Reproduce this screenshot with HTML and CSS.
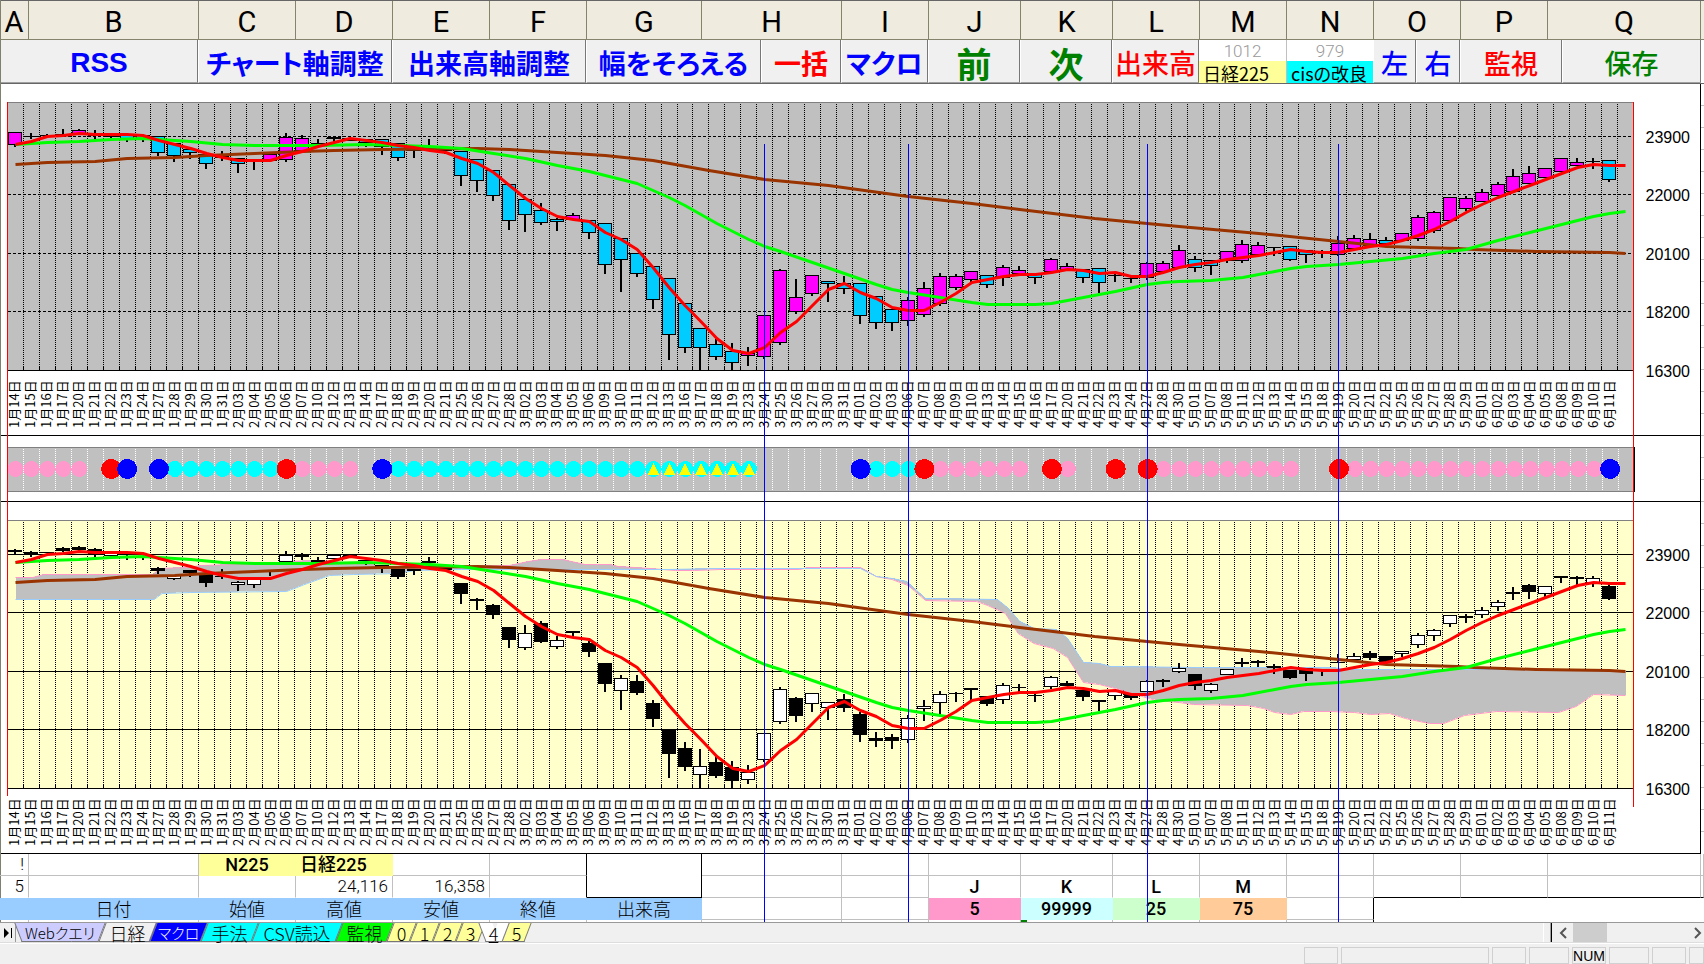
FILE: index.html
```html
<!DOCTYPE html>
<html lang="ja">
<head>
<meta charset="utf-8">
<title>日経225 チャート</title>
<link rel="stylesheet" href="styles.css">
</head>
<body>
<main class="sheet">
  <div class="columns">
    <span>A</span><span>B</span><span>C</span><span>D</span><span>E</span><span>F</span><span>G</span><span>H</span><span>I</span><span>J</span><span>K</span><span>L</span><span>M</span><span>N</span><span>O</span><span>P</span><span>Q</span><span></span>
  </div>
  <div class="macros">
    <button class="macro blue bold latin">RSS</button>
    <button class="macro blue bold">チャート軸調整</button>
    <button class="macro blue bold">出来高軸調整</button>
    <button class="macro blue bold">幅をそろえる</button>
    <button class="macro red bold">一括</button>
    <button class="macro blue bold">マクロ</button>
    <button class="macro green bold large">前</button>
    <button class="macro green bold large">次</button>
    <button class="macro red">出来高</button>
    <div class="info"><span class="info-num">1012</span><span class="info-name yellow">日経225</span></div>
    <div class="info"><span class="info-num">979</span><span class="info-name aqua">cisの改良</span></div>
    <button class="macro blue">左</button>
    <button class="macro blue">右</button>
    <button class="macro red">監視</button>
    <button class="macro green">保存</button>
    <div class="macro-end"></div>
  </div>
  <div class="body">
    <svg class="charts" id="charts" viewBox="0 84 1704 770" role="img" aria-label="日経225 日足チャート"></svg>
    <table class="cells">
      <colgroup>
        <col class="wa"><col class="wb"><col class="wc"><col class="wc"><col class="wc"><col class="wc"><col class="wg"><col class="wh"><col class="wi"><col class="wj"><col class="wj"><col class="wi"><col class="wi"><col class="wi"><col class="wi"><col class="wi"><col class="wq"><col class="wr">
      </colgroup>
      <tbody>
        <tr><td class="num">!</td><td></td><td class="yellow mid">N225</td><td class="yellow name">日経225</td><td></td><td class="to-box"></td><td class="box" rowspan="2"></td><td></td><td></td><td></td><td></td><td></td><td></td><td></td><td></td><td></td><td></td><td></td></tr>
        <tr><td class="num flat">5</td><td class="flat"></td><td class="flat"></td><td class="num flat">24,116</td><td class="num flat">16,358</td><td class="flat to-box"></td><td></td><td></td><td class="mid flat">J</td><td class="mid flat">K</td><td class="mid flat">L</td><td class="mid flat">M</td><td></td><td class="box-top"></td><td class="box-top"></td><td class="box-top"></td><td class="box-top"></td></tr>
        <tr class="heads"><td class="sky"></td><th class="sky">日付</th><th class="sky">始値</th><th class="sky">高値</th><th class="sky">安値</th><th class="sky">終値</th><th class="sky">出来高</th><td></td><td></td><td class="mid pink">5</td><td class="mid ice">99999</td><td class="mid mint">25</td><td class="mid peach">75</td><td class="box-left"></td><td class="open" colspan="4"></td></tr>
        <tr class="sliver"><td></td><td></td><td></td><td></td><td></td><td></td><td></td><td></td><td></td><td></td><td class="mark"></td><td></td><td></td><td class="box-left"></td><td class="open" colspan="4"></td></tr>
      </tbody>
    </table>
    <i class="event e1"></i><i class="event e2"></i><i class="event e3"></i><i class="event e4"></i>
  </div>
</main>
<nav class="tabbar">
  <button class="last" aria-label="最後のシート"><svg viewBox="0 0 10 10" width="10" height="10"><path d="M1 0v10l5-5zM8 0h1v10H8z"/></svg></button>
  <div class="tabs">
    <button class="tab wide small lilac first">Webクエリ</button>
    <button class="tab medium plain">日経</button>
    <button class="tab medium small navy">マクロ</button>
    <button class="tab medium aqua">手法</button>
    <button class="tab wide aqua">CSV読込</button>
    <button class="tab medium lime">監視</button>
    <button class="tab yellow">0</button>
    <button class="tab yellow">1</button>
    <button class="tab yellow">2</button>
    <button class="tab yellow">3</button>
    <button class="tab current first" aria-current="page">4</button>
    <button class="tab yellow">5</button>
  </div>
  <div class="scroll">
    <button aria-label="左へ"><svg viewBox="0 0 8 12" width="8" height="12"><path d="M7 1L2 6l5 5" fill="none" stroke="#555" stroke-width="2"/></svg></button>
    <div class="thumb"></div>
    <button class="to-right" aria-label="右へ"><svg viewBox="0 0 8 12" width="8" height="12"><path d="M1 1l5 5-5 5" fill="none" stroke="#555" stroke-width="2"/></svg></button>
  </div>
</nav>
<footer class="status">
  <span class="s34"></span><span class="s148"></span><span class="s34"></span><span class="s40"></span><span class="s34">NUM</span><span class="s40"></span><span class="s34"></span><span class="s15"></span>
</footer>
<script src="charts.js"></script>
</body>
</html>
```
FILE: styles.css
```css
* { box-sizing: border-box; }
body {
  margin: 0;
  background: #f0f0f0;
  color: #000;
  font-family: "Noto Sans CJK JP", "Liberation Sans", sans-serif;
  font-feature-settings: "palt";
  overflow-x: hidden;
}
button {
  margin: 0;
  padding: 0;
  border: 0;
  background: none;
  font: inherit;
  font-feature-settings: inherit;
  white-space: nowrap;
}

.yellow { background: #ffff99; --fill: #ffff99; }
.aqua { background: #00ffff; --fill: #00ffff; }
.blue { color: #0000ff; }
.red { color: #ff0000; }
.green { color: #008000; }

.sheet { position: relative; background: #fff; }
.sheet::before {
  content: "";
  position: absolute;
  left: 0;
  top: 0;
  bottom: 0;
  width: 1px;
  background: #808070;
}

.columns {
  display: grid;
  grid-template-columns: 29fr 170fr 97fr 97fr 97fr 97fr 115fr 140fr 87fr 92fr 92fr 87fr 87fr 87fr 87fr 87fr 153fr 3fr;
  grid-template-rows: 39px;
  height: 40px;
  border-top: 1px solid #666;
  background: #efebde;
  font: 29px/42px Roboto, "Liberation Sans", sans-serif;
  text-align: center;
}
.columns span {
  min-width: 0;
  border-right: 1px solid #84846c;
  border-bottom: 1px solid #84846c;
}
.columns span:last-child { border-right: 0; }

.macros {
  display: grid;
  grid-template-columns: 198fr 194fr 194fr 175fr 80fr 87fr 92fr 92fr 87fr 87fr 87fr 43fr 44fr 102fr 139fr 3fr;
  grid-template-rows: 43px;
  height: 44px;
  border-bottom: 1px solid #666;
}
.macro {
  min-width: 0;
  padding-top: 3px;
  background: #f0f0f0;
  border-left: 1px solid #fff;
  border-right: 1px solid #777;
  border-bottom: 1px solid #a0a0a0;
  font-size: 27px;
  font-weight: 500;
  line-height: 39px;
}
.bold { font-weight: 700; }
.large { font-size: 35px; }
.latin { font-family: "Liberation Sans", sans-serif; font-size: 28px; }
.info { display: flex; flex-direction: column; min-width: 0; text-align: center; }
.info + .info { border-left: 1px solid #c0c0c0; }
.info-num { flex: none; height: 21px; color: #999; font: 300 17px/22px Roboto, sans-serif; }
.info-name { flex: 1; min-height: 0; padding-left: 4px; font-size: 18px; line-height: 24px; text-align: left; white-space: nowrap; }
.macro-end { background: #fff; }

.body { position: relative; }
.charts { display: block; width: 100%; height: auto; shape-rendering: crispEdges; }
.charts polyline { shape-rendering: auto; }
.charts .date { font-size: 13px; font-feature-settings: "palt" 0; }
.charts .price { font: 16px "Liberation Sans", sans-serif; }

.cells { width: 100%; table-layout: fixed; border-collapse: separate; border-spacing: 0; font-size: 18px; line-height: 21px; }
.wa { width: 29px; }
.wb { width: 170px; }
.wc { width: 97px; }
.wg { width: 115px; }
.wh { width: 140px; }
.wi { width: 87px; }
.wj { width: 92px; }
.wq { width: 153px; }
.wr { width: 3px; }
.cells td, .cells th {
  height: 22px;
  padding: 0;
  border-right: 1px solid #c0c0c0;
  border-bottom: 1px solid #c0c0c0;
  font-weight: 300;
  white-space: nowrap;
}
.cells .sliver td { height: 2px; border-bottom: 0; }
.cells .num { padding-right: 4px; font: 300 17px/21px Roboto, sans-serif; text-align: right; }
.cells .mid, .cells .name { font-family: Roboto, "Noto Sans CJK JP", sans-serif; font-weight: 500; }
.cells .mid { text-align: center; }
.cells .name { padding-left: 4px; }
.cells .yellow { border-color: #ffff99; }
.cells .flat { border-bottom-color: transparent; }
.cells .sky { background: #99ccff; border-color: #99ccff; }
.cells .pink { background: #ff99cc; border-color: #ff99cc; }
.cells .ice { background: #ccffff; border-color: #ccffff; }
.cells .mint { background: #ccffcc; border-color: #ccffcc; }
.cells .peach { background: #ffcc99; border-color: #ffcc99; }
.cells .to-box, .cells .box-left { border-right-color: #000; }
.cells .box { border-color: #000; }
.cells .box-top { border-bottom-color: #000; }
.cells .open { border-color: transparent; }
.cells .mark { background: linear-gradient(90deg, #008000 6px, transparent 6px); }

.event { position: absolute; top: 60px; bottom: 0; width: 1px; background: #0000ff; }
.e1 { left: 44.86%; }
.e2 { left: 53.3%; }
.e3 { left: 67.34%; }
.e4 { left: 78.52%; }

.tabbar { display: flex; height: 21px; border-top: 1px solid #999; border-bottom: 1px solid #ddd; }
.last { display: flex; align-items: center; justify-content: center; width: 16px; border-right: 1px solid #999; }
.tabs { display: flex; flex: 1; padding-left: 2px; }
.tab {
  position: relative;
  z-index: 0;
  flex: 0 0 23px;
  background: none;
  font-size: 18px;
  font-weight: 300;
  line-height: 18px;
}
.tab.wide { flex-basis: 84px; }
.tab.medium { flex-basis: 51px; }
.tab.small { font-size: 15px; }
.tab::before, .tab.first::after {
  content: "";
  position: absolute;
  z-index: -1;
  inset: 0;
  background: var(--fill);
  border: 1px solid #777;
  border-top: 0;
  transform: skewX(-21deg);
}
.tab.first::before { left: 50%; border-left: 0; }
.tab.first::after { right: 40%; border-right: 0; transform: skewX(21deg); }
.lilac { --fill: #ccccff; }
.plain { --fill: #f0f0f0; }
.navy { --fill: #0000ff; color: #fff; }
.lime { --fill: #00ff00; }
.current { --fill: #fff; z-index: 1; text-decoration: underline; }
.scroll { display: flex; flex: 0 0 153px; align-items: stretch; border-left: 1px solid #000; box-shadow: -1px 0 #a0a0a0, -7px 0 #f0f0f0, -8px 0 #fff; }
.scroll button { width: 21px; display: flex; align-items: center; justify-content: center; }
.thumb { width: 34px; background: #cdcdcd; }
.scroll .to-right { width: 12px; margin-left: auto; }

.status { display: flex; justify-content: flex-end; gap: 3px; height: 21px; padding-top: 3px; border-top: 1px solid #fff; font: 14px/17px "Liberation Sans", sans-serif; text-align: center; }
.status span { border: 1px solid #d0d0d0; }
.s15 { width: 15px; }
.s34 { width: 34px; }
.s40 { width: 40px; }
.s148 { width: 148px; }
```
FILE: charts.js
```js
const svg = document.getElementById('charts');
const LEFT = 7.5, RIGHT = 1633.5, COUNT = 102;
const STEP = (RIGHT - LEFT) / COUNT;
const SHIFT = 418;
const out = [];
const cx = i => LEFT + STEP * (i + 0.5);
const line = (x1, y1, x2, y2, c, extra = '') =>
  out.push(`<path d="M${x1} ${y1}L${x2} ${y2}" stroke="${c}" fill="none" ${extra}/>`);
const rect = (x, y, w, h, fill, stroke = 'none') =>
  out.push(`<rect x="${x}" y="${y}" width="${w}" height="${h}" fill="${fill}" stroke="${stroke}"/>`);
const parse = s => s.trim().split(/\s+/).map(p => p.split(',').map(Number));

const days = {
  1: '14 15 16 17 20 21 22 23 24 27 28 29 30 31',
  2: '03 04 05 06 07 10 12 13 14 17 18 19 20 21 25 26 27 28',
  3: '02 03 04 05 06 09 10 11 12 13 16 17 18 19 23 24 25 26 27 30 31',
  4: '01 02 03 06 07 08 09 10 13 14 15 16 17 20 21 22 23 24 27 28 30',
  5: '01 07 08 11 12 13 14 15 18 19 20 21 22 25 26 27 28 29',
  6: '01 02 03 04 05 08 09 10 11'
};
const dates = Object.entries(days).flatMap(([m, d]) => d.split(' ').map(x => `${m}月${x}日`));

// kind, body top, body bottom, high, low
const averaged = `m,132,144,132,146 k,136,136,133,138 k,135,135,134,137 k,134,134,129,135 m,130,133,129,134
c,133,135,130,138 k,134,136,134,139 c,135,138,135,141 c,135,139,135,141 c,136,152,136,155
c,143,155,143,161 c,149,152,149,158 c,154,163,154,168 k,155,157,151,160 c,158,163,158,172
k,160,160,160,169 m,154,160,154,160 m,137,159,133,161 m,138,150,135,150 k,143,143,139,144
k,137,138,136,141 k,138,140,138,140 c,139,142,139,146 c,139,146,139,154 c,143,157,143,160
k,150,150,145,157 k,147,147,139,150 k,150,150,147,153 c,151,175,151,185 c,159,180,159,191
c,170,195,170,200 c,184,220,184,229 c,199,214,199,231 c,210,222,203,224 c,219,221,218,230
m,215,219,213,219 c,220,232,220,238 c,223,264,223,273 c,238,259,238,291 c,253,273,253,276
c,266,299,266,308 c,278,334,278,359 c,303,347,303,352 c,328,347,328,369 c,344,356,339,359
c,351,362,343,369 m,353,355,347,365 m,315,356,315,358 m,270,342,269,344 m,297,311,279,313
m,275,293,275,295 c,281,283,281,301 c,283,288,276,293 c,283,315,283,323 c,296,322,296,328
c,309,322,309,330 m,300,320,297,325 m,288,314,282,316 m,276,303,273,305 m,276,287,274,289
m,271,279,271,281 c,275,284,275,287 m,267,277,265,285 m,270,273,266,273 c,274,277,274,283
m,259,271,258,271 m,266,269,263,269 c,269,277,269,282 c,268,282,268,292 k,275,275,274,281
k,278,278,276,282 m,263,277,262,279 m,263,271,261,271 m,250,267,245,267 c,259,267,256,271
c,260,265,260,274 m,251,260,251,262 m,244,260,240,262 m,245,254,242,254 k,247,247,247,255
c,246,259,246,260 c,250,254,250,262 k,252,252,250,257 m,243,254,236,255 m,238,248,235,248
m,239,245,233,245 c,240,243,237,243 m,233,240,233,240 m,217,238,215,240 m,212,230,211,232
m,197,220,197,220 m,198,208,196,210 m,192,201,189,201 m,184,195,182,195 m,176,191,169,191
m,173,183,166,183 m,168,177,168,177 m,158,171,158,171 m,162,165,158,165 k,161,161,158,168 c,160,179,160,181`;
const plain = `b,132,133,131,135 b,134,136,133,138 k,134,134,134,134 b,130,132,129,133 b,129,131,128,132
b,131,135,130,138 w,133,137,133,137 b,135,136,135,141 b,136,136,136,141 b,150,152,149,155
w,157,160,157,161 b,152,154,152,158 b,156,164,156,168 b,158,158,151,160 w,164,166,163,172
w,161,166,161,169 b,153,153,153,157 w,137,143,133,143 b,136,138,135,141 b,142,144,139,144
w,137,140,137,140 b,136,138,136,138 k,142,142,142,146 b,147,148,147,154 b,151,158,151,160
b,151,152,151,156 b,143,144,139,145 b,150,151,150,151 b,165,175,165,185 b,181,182,180,191
b,187,196,186,200 b,209,221,209,229 w,215,229,207,231 b,205,223,203,224 w,222,228,218,230
b,213,214,213,218 b,225,233,223,238 b,245,265,245,273 w,260,272,257,291 b,263,274,257,276
b,285,300,282,308 b,312,335,312,359 b,330,348,324,352 w,348,356,331,369 b,344,357,337,359
b,349,362,343,369 w,354,361,347,365 w,315,341,315,343 w,271,303,269,305 b,280,297,279,303
w,275,285,275,293 w,284,289,284,301 b,281,289,276,293 b,296,316,294,323 b,320,322,314,328
b,319,322,316,330 w,300,321,297,324 w,288,290,282,302 w,276,284,273,296 k,275,275,274,283
b,270,271,270,282 b,278,285,278,287 w,267,281,265,285 k,269,269,266,274 b,277,277,273,283
w,259,268,258,270 b,265,267,263,267 b,272,278,272,282 b,282,283,282,292 w,273,277,273,281
b,276,279,276,281 w,263,273,262,273 b,262,263,261,268 w,250,253,245,254 b,256,267,256,271
w,266,272,265,274 w,251,256,251,256 b,244,245,240,248 b,243,244,242,248 b,248,249,246,255
b,252,259,252,260 b,250,255,250,262 k,251,251,251,257 k,244,244,236,244 w,238,241,235,241
b,235,239,233,241 b,238,243,238,243 w,233,235,233,238 w,217,226,215,229 w,212,217,211,222
w,197,205,197,208 b,198,199,196,204 w,192,196,189,199 w,184,188,182,192 b,174,175,169,181
b,167,173,166,180 w,168,175,168,178 b,158,159,158,164 b,159,160,158,166 w,160,164,158,168 b,168,180,166,181`;

const red = [144,141,136,135,133,134,134,134,135,140,144,148,153,157,160,160,160,155,151,146,142,138,140,142,145,147,150,152,158,163,172,185,198,208,216,219,221,232,239,249,267,287,305,321,338,350,353,347,332,321,305,289,283,292,298,307,310,310,302,293,282,279,276,274,274,272,269,270,273,272,276,276,272,267,264,262,259,257,255,252,249,251,252,252,249,246,244,240,235,229,221,212,204,197,191,185,179,173,167,164,165,165].map((y, i) => [i, y]);
const green = parse('0,144 2,142 4,141 6,139 8,138 9,139 11,141 13,144 15,145 19,145 22,144 24,145 26,146 28,148 30,153 32,158 34,165 36,171 39,183 41,197 42,205 44,223 46,239 47,246 48,251 50,262 52,273 54,284 55,289 56,292 58,297 60,302 61,304 64,304 65,303 67,297 69,291 71,284 72,282 73,281 75,280 77,277 79,271 80,268 81,266 83,264 85,261 87,258 89,253 91,249 93,240 95,232 97,224 99,216 100,213 101,211');
const brown = parse('0,164 2,162 5,161 7,158 10,157 12,155 15,153 18,151 20,150 23,149 29,148 31,149 33,151 35,153 37,155 40,160 43.5,170 47,179 51,185 56,196 60,203 63,209 67.7,218 71,223 73,226 78,233 83,241 86,246 90.5,248 91.5,249 95.4,251 100,252 101,253');
const spanA = parse('0,159 1.1,159 1.8,156 8.6,156 9.1,150 10.7,149 11.7,147 14,146 16.5,145 17,143 19,142 20,143 21,145 22.4,146 22.8,149 25,150 27.6,148 31,147 32.2,143 33,141 34.3,141 35.7,146 37.3,146 37.8,148 39.8,150 41.4,152 42.6,152 44.2,151 49.2,151 49.7,149 53,149 54,158 55,161 56,167 57.1,182 60.3,183 61,187 62.1,195 62.9,215 63.9,225 65.1,230 66,239 67,264 68,266 69,270 71.1,280 71.6,282 73,284 73.9,286 77.3,287 78.3,290 79,294 80,296 80.8,293 82.6,293 84,294 85,296 86.2,295 87.2,300 88.7,305 89.6,305 90.9,297 92.9,293 96.8,294 97.9,288 99,276 101,277');
const spanB = parse('0,181 8.7,181 9.2,175 11,174 17,173 18.3,165 19.7,157 21.2,156 24,155 25,152 28,151 41,151 44.2,150 53,150 54,158 55,160 55.9,163 57.1,180 61.6,181 62.3,190 63,203 63.9,210 65.3,211 66,220 67,244 68,245 68.7,248 74,249 82.6,249 83.6,251 95.4,251 101,253');

const points = (list, dy) => list.map(([i, y]) => `${cx(i).toFixed(1)},${y + dy}`).join(' ');
const curve = (list, dy, color, width) =>
  out.push(`<polyline points="${points(list, dy)}" fill="none" stroke="${color}" stroke-width="${width}" stroke-linejoin="round"/>`);

const fills = { m: '#f0f', c: '#0cf', w: '#fff', b: '#000', k: '#000' };
function candles(text, dy) {
  text.trim().split(/\s+/).forEach((entry, i) => {
    const [kind, ...nums] = entry.split(',');
    const [top, bottom, high, low] = nums.map(n => Number(n) + dy);
    const x = Math.floor(cx(i));
    if (low > high) line(x, high, x, low + 1, '#000', 'stroke-width="2"');
    if (top === bottom) rect(x - 7, top, 14, 1, '#000');
    else rect(x - 6.5, top + 0.5, 13, bottom - top, fills[kind], '#000');
  });
}

function frame(dy, background, dash, cloud) {
  rect(LEFT, 102 + dy, RIGHT - LEFT, 268, background);
  [136.5, 194.5, 253.5, 311.5].forEach(y => line(8, y + dy, RIGHT, y + dy, '#000', dash));
  for (let i = 1; i < COUNT; i++) {
    const x = Math.floor(LEFT + STEP * i) + 0.5;
    line(x, 104 + dy, x, 366 + dy, '#000', 'stroke-dasharray="1 1"');
    line(x, 366 + dy, x, 370 + dy, '#000');
  }
  if (cloud) {
    out.push(`<polygon points="${points(spanA, dy)} ${points([...spanB].reverse(), dy)}" fill="#c0c0c0"/>`);
    curve(spanA, dy + 0.5, '#ff99cc', 1);
    curve(spanB, dy + 0.5, '#99ccff', 1);
  }
  line(8, 102.5 + dy, RIGHT, 102.5 + dy, '#808080');
  line(8, 370.5 + dy, RIGHT, 370.5 + dy, '#000');
  [23900, 22000, 20100, 18200, 16300].forEach((v, n) =>
    out.push(`<text class="price" x="1690" y="${143 + dy + Math.floor(58.5 * n)}" text-anchor="end">${v}</text>`));
  dates.forEach((d, i) => {
    const x = Math.round(cx(i)) + 4;
    out.push(`<text class="date" transform="translate(${x} ${428 + dy}) rotate(-90)">${d}</text>`);
  });
}

frame(0, '#c0c0c0', 'stroke-dasharray="3 2"', false);
candles(averaged, 0);
curve(brown, 0.5, '#993300', 3);
curve(green, 0.5, '#00ff00', 3);
curve(red, 0.5, '#ff0000', 3);

frame(SHIFT, '#ffffcc', '', true);
candles(plain, SHIFT);
curve(brown, SHIFT + 0.5, '#993300', 3);
curve(green, SHIFT + 0.5, '#00ff00', 3);
curve(red, SHIFT + 0.5, '#ff0000', 3);

// signal strip
const stripStep = (1634 - LEFT) / COUNT;
rect(LEFT, 447, 1627, 44, '#c0c0c0');
for (let i = 1; i < COUNT; i++) {
  const x = Math.floor(LEFT + stripStep * i) + 0.5;
  line(x, 449, x, 490, '#fff', 'stroke-dasharray="1 1"');
}
line(8, 447.5, 1635, 447.5, '#808080');
line(8, 491.5, 1635, 491.5, '#808080');
line(1634.5, 447, 1634.5, 492, '#000');
const dot = (i, r, c) => out.push(`<circle cx="${LEFT + stripStep * (i + 0.5)}" cy="469" r="${r}" fill="${c}"/>`);
const run = (from, to, c) => { for (let i = from; i <= to; i++) dot(i, 8, c); };
[[0, 4], [18, 21], [58, 63], [66, 66], [72, 80], [84, 99]].forEach(([a, b]) => run(a, b, '#ff99cc'));
[[10, 16], [24, 46], [54, 56]].forEach(([a, b]) => run(a, b, '#00ffff'));
[6, 17, 57, 65, 69, 71, 83].forEach(i => dot(i, 10, '#ff0000'));
[7, 9, 23, 53, 100].forEach(i => dot(i, 10, '#0000ff'));
for (let i = 40; i <= 46; i++) {
  const x = LEFT + stripStep * (i + 0.5);
  out.push(`<polygon points="${x - 6},475 ${x + 6},475 ${x},463" fill="#ffff00"/>`);
}

// object borders and the sliver of sheet to the right
[435.5, 501.5, 853.5].forEach(y => line(1, y, 1701, y, '#000'));
line(1700.5, 84, 1700.5, 854, '#000');
for (let y = 105.5; y < 853; y += 22) line(1701, y, 1704, y, '#c0c0c0');
line(7.5, 102, 7.5, 796, '#ff0000');
line(1633.5, 102, 1633.5, 807, '#ff0000');

svg.innerHTML = out.join('');
```
